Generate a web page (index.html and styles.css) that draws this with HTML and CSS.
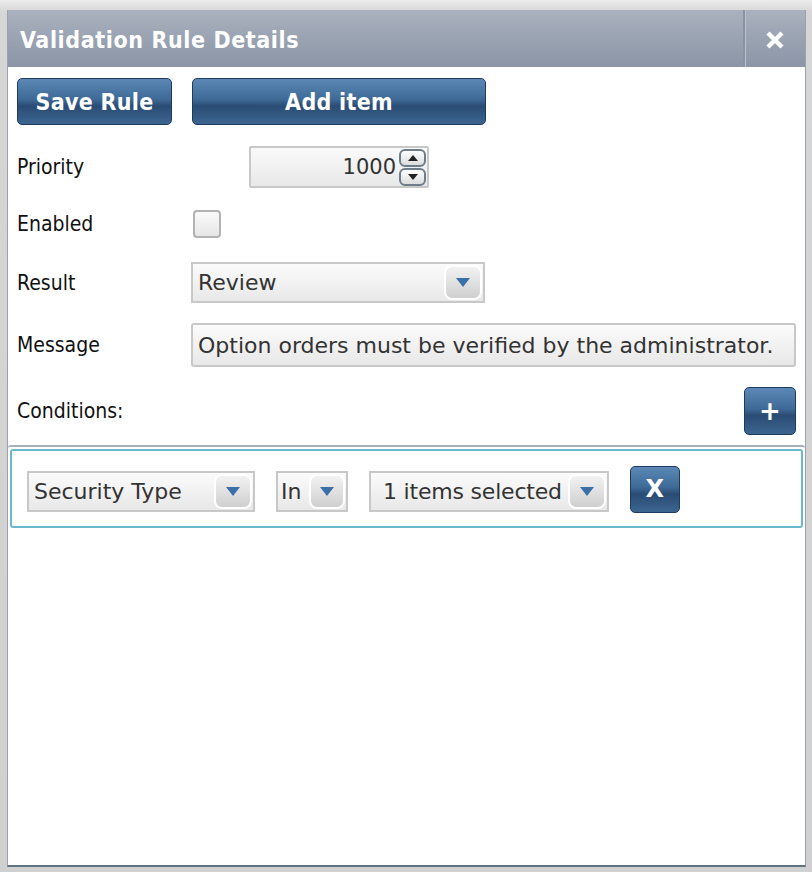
FILE: index.html
```html
<!DOCTYPE html>
<html>
<head>
<meta charset="utf-8">
<link rel="stylesheet" href="styles.css">
</head>
<body>
<div class="frame">
  <div class="dialog">
    <div class="header">
      <div class="title">Validation Rule Details</div>
      <div class="close">
        <svg width="20" height="20" viewBox="0 0 20 20"><path d="M3 3 L17 17 M17 3 L3 17" stroke="#fff" stroke-width="4.5" stroke-linecap="butt"/></svg>
      </div>
    </div>
    <div class="body">
      <div class="toolbar">
        <button class="btn btn-save">Save Rule</button>
        <button class="btn btn-add">Add item</button>
      </div>
      <div class="row row-priority">
        <div class="label">Priority</div>
        <div class="numbox">
          <span class="numval">1000</span>
          <span class="spin">
            <span class="spinbtn"><svg width="10" height="6" viewBox="0 0 10 6"><path d="M5 0 L10 6 L0 6Z" fill="#222"/></svg></span>
            <span class="spinbtn"><svg width="10" height="6" viewBox="0 0 10 6"><path d="M0 0 L10 0 L5 6Z" fill="#222"/></svg></span>
          </span>
        </div>
      </div>
      <div class="row row-enabled">
        <div class="label">Enabled</div>
        <div class="checkbox"></div>
      </div>
      <div class="row row-result">
        <div class="label">Result</div>
        <div class="select sel-result">
          <span class="seltext">Review</span>
          <span class="arrow"><svg width="14" height="9" viewBox="0 0 14 9"><path d="M0 0 L14 0 L7 9Z" fill="#3a6fa8"/></svg></span>
        </div>
      </div>
      <div class="row row-message">
        <div class="label">Message</div>
        <div class="textbox">Option orders must be verified by the administrator.</div>
      </div>
      <div class="row row-cond">
        <div class="label">Conditions:</div>
        <button class="btn btn-plus">+</button>
      </div>
    </div>
    <div class="conditions">
      <div class="cond-item">
        <div class="select sel-field">
          <span class="seltext">Security Type</span>
          <span class="arrow"><svg width="14" height="9" viewBox="0 0 14 9"><path d="M0 0 L14 0 L7 9Z" fill="#3a6fa8"/></svg></span>
        </div>
        <div class="select sel-op">
          <span class="seltext">In</span>
          <span class="arrow"><svg width="14" height="9" viewBox="0 0 14 9"><path d="M0 0 L14 0 L7 9Z" fill="#3a6fa8"/></svg></span>
        </div>
        <div class="select sel-val">
          <span class="seltext">1 items selected</span>
          <span class="arrow"><svg width="14" height="9" viewBox="0 0 14 9"><path d="M0 0 L14 0 L7 9Z" fill="#3a6fa8"/></svg></span>
        </div>
        <button class="btn btn-x">X</button>
      </div>
    </div>
  </div>
</div>
</body>
</html>
```
FILE: styles.css
```css
html, body {
  margin: 0;
  padding: 0;
}
body {
  width: 812px;
  height: 872px;
  background: #d4d4d4;
  font-family: "DejaVu Sans", Verdana, sans-serif;
  overflow: hidden;
}
.frame {
  height: 872px;
  box-sizing: border-box;
  padding: 10px 6px 5px 7px;
  background: linear-gradient(#ececec, #d6d6d6 12px, #d0d0d0);
}
.dialog {
  height: 100%;
  box-sizing: border-box;
  background: #fff;
  border-left: 1px solid #9aa3ad;
  border-right: 1px solid #9aa3ad;
  border-bottom: 2px solid #5f7482;
  display: flex;
  flex-direction: column;
}
.header {
  height: 57px;
  flex: none;
  display: flex;
  align-items: stretch;
  background: linear-gradient(#aab1be, #8b95a6);
}
.title {
  flex: 1;
  padding-left: 12px;
  display: flex;
  align-items: center;
  color: #fff;
  font-family: "DejaVu Sans Condensed", "DejaVu Sans", sans-serif;
  font-weight: bold;
  font-size: 23px;
  letter-spacing: 0.6px;
  padding-top: 2px;
}
.close {
  width: 60px;
  border-left: 2px solid #8a93a1;
  box-shadow: inset 1px 0 0 #b9c0cb;
  display: flex;
  align-items: center;
  justify-content: center;
  padding-top: 2px;
}
.body {
  padding: 11px 9px 0 9px;
  flex: none;
}
.toolbar {
  display: flex;
  gap: 20px;
  height: 47px;
}
.btn {
  font-family: "DejaVu Sans Condensed", "DejaVu Sans", sans-serif;
  font-weight: bold;
  color: #fff;
  font-size: 23px;
  letter-spacing: 0.3px;
  border: 1px solid #1f3b5c;
  border-radius: 5px;
  background: linear-gradient(#5b88b6 0%, #3f6a97 45%, #2a4c74 60%, #3b6590 100%);
  padding: 0;
  cursor: pointer;
}
.btn-save { width: 155px; }
.btn-add { width: 294px; }
.row {
  display: flex;
  align-items: center;
}
.label {
  font-family: "DejaVu Sans Condensed", "DejaVu Sans", sans-serif;
  font-size: 21px;
  color: #111;
  width: 174px;
  flex: none;
}
.row-priority {
  margin-top: 21px;
  height: 42px;
}
.row-priority .label { width: 232px; }
.numbox {
  width: 180px;
  height: 42px;
  box-sizing: border-box;
  border: 2px solid #c8c8c8;
  border-radius: 2px;
  background: linear-gradient(#fafafa, #e8e8e8);
  display: flex;
  align-items: center;
  justify-content: flex-end;
  gap: 3px;
  padding-right: 1px;
}
.numval {
  font-size: 21px;
  color: #333;
}
.spin {
  display: flex;
  flex-direction: column;
  gap: 1px;
}
.spinbtn {
  width: 27px;
  height: 18px;
  box-sizing: border-box;
  border: 2px solid #6f7d8a;
  border-radius: 6px;
  background: linear-gradient(#ffffff, #dcdcdc);
  display: flex;
  align-items: center;
  justify-content: center;
}
.row-enabled {
  margin-top: 20px;
  height: 32px;
}
.row-enabled .label { width: 176px; }
.checkbox {
  width: 28px;
  height: 28px;
  box-sizing: border-box;
  border: 2px solid #b3b3b3;
  border-radius: 4px;
  background: linear-gradient(#fafafa, #e6e6e6);
}
.row-result {
  margin-top: 22px;
  height: 41px;
}
.select {
  height: 41px;
  box-sizing: border-box;
  border: 2px solid #c8c8c8;
  background: linear-gradient(#fbfbfb, #e8e8e8);
  display: flex;
  align-items: center;
  justify-content: space-between;
  padding: 1px 1px 1px 5px;
}
.seltext {
  font-size: 22px;
  color: #333;
  white-space: nowrap;
}
.arrow {
  width: 38px;
  height: 100%;
  box-sizing: border-box;
  border: 2px solid #fff;
  border-radius: 8px;
  background: linear-gradient(#f2f2f2, #cfcfcf);
  display: flex;
  align-items: center;
  justify-content: center;
  flex: none;
}
.sel-result { width: 294px; }
.row-message {
  margin-top: 20px;
  height: 44px;
}
.textbox {
  width: 606px;
  height: 44px;
  box-sizing: border-box;
  border: 2px solid #c8c8c8;
  border-radius: 3px;
  background: linear-gradient(#fbfbfb, #e8e8e8);
  font-size: 22px;
  color: #333;
  display: flex;
  align-items: center;
  padding-left: 5px;
  white-space: nowrap;
}
.row-cond {
  margin-top: 20px;
  height: 48px;
  justify-content: space-between;
}
.btn-plus {
  width: 52px;
  height: 48px;
  font-family: "DejaVu Sans", sans-serif;
  font-size: 26px;
}
.conditions {
  flex: 1;
  margin-top: 10px;
  border-top: 2px solid #a7b0b8;
  border-radius: 3px 3px 0 0;
  padding: 2px 2px 0 2px;
}
.cond-item {
  height: 79px;
  box-sizing: border-box;
  border: 2px solid #6bb9cc;
  border-radius: 3px;
  display: flex;
  align-items: center;
  padding: 5px 0 0 15px;
  gap: 21px;
}
.sel-field { width: 228px; }
.sel-op { width: 72px; padding-left: 3px; }
.sel-op .arrow { width: 36px; }
.sel-val { width: 240px; padding-left: 12px; }
.sel-val .seltext { letter-spacing: -0.2px; }
.btn-x {
  width: 50px;
  height: 47px;
  margin-top: -4px;
  font-family: "DejaVu Sans", sans-serif;
  font-size: 24px;
}
```
